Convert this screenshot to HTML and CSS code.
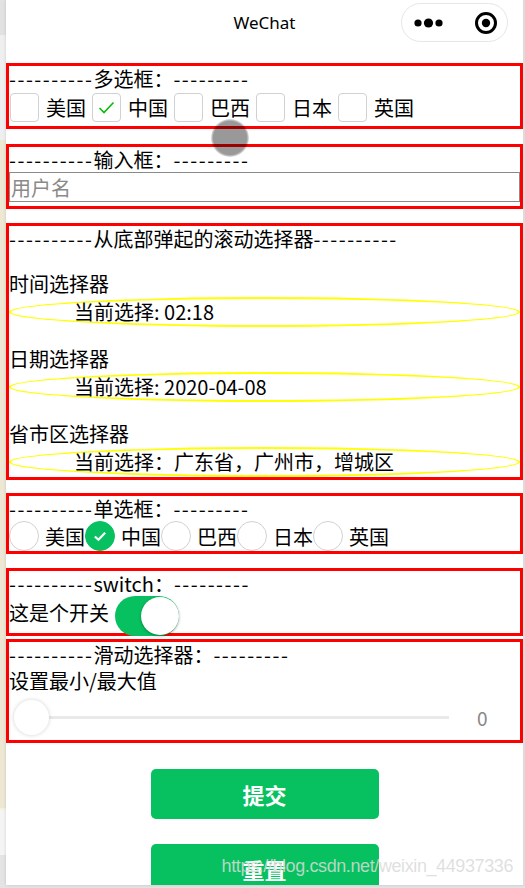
FILE: index.html
```html
<!DOCTYPE html>
<html lang="zh-CN">
<head>
<meta charset="utf-8">
<title>WeChat</title>
<link rel="stylesheet" href="styles.css">
</head>
<body>
<div class="screen">
  <div class="phone">
    <header class="nav">
      <span class="nav-title">WeChat</span>
      <div class="capsule">
        <svg class="cap-dots" width="30" height="12" viewBox="0 0 30 12"><circle cx="4" cy="6" r="3.6"/><circle cx="14.5" cy="6" r="4.6"/><circle cx="25" cy="6" r="3.6"/></svg>
        <svg class="cap-target" width="24" height="24" viewBox="0 0 24 24"><circle cx="12" cy="12" r="9.5" fill="none" stroke="#000" stroke-width="3"/><circle cx="12" cy="12" r="4.2"/></svg>
      </div>
    </header>

    <main class="page">
      <section class="box box-check">
        <div class="title"><span class="dash">----------</span>多选框：<span class="dash">---------</span></div>
        <div class="check-row">
          <label class="check-item"><span class="checkbox"></span><span>美国</span></label>
          <label class="check-item"><span class="checkbox"><svg width="27" height="27" viewBox="0 0 27 27"><path d="M6.5 14 L11 18.5 L20.5 8.5" fill="none" stroke="#09bb07" stroke-width="1.6"/></svg></span><span>中国</span></label>
          <label class="check-item"><span class="checkbox"></span><span>巴西</span></label>
          <label class="check-item"><span class="checkbox"></span><span>日本</span></label>
          <label class="check-item"><span class="checkbox"></span><span>英国</span></label>
        </div>
      </section>

      <section class="box box-input">
        <div class="title"><span class="dash">----------</span>输入框：<span class="dash">---------</span></div>
        <input class="input" type="text" placeholder="用户名">
      </section>

      <section class="box box-picker">
        <div class="title"><span class="dash">----------</span>从底部弹起的滚动选择器<span class="dash">----------</span></div>
        <div class="picker">
          <div class="picker-label">时间选择器</div>
          <div class="picker-value">当前选择: 02:18</div>
        </div>
        <div class="picker">
          <div class="picker-label">日期选择器</div>
          <div class="picker-value">当前选择: 2020-04-08</div>
        </div>
        <div class="picker">
          <div class="picker-label">省市区选择器</div>
          <div class="picker-value">当前选择：广东省，广州市，增城区</div>
        </div>
      </section>

      <section class="box box-radio">
        <div class="title"><span class="dash">----------</span>单选框：<span class="dash">---------</span></div>
        <div class="radio-row">
          <label class="radio-item"><span class="radio"></span><span>美国</span></label>
          <label class="radio-item"><span class="radio radio-on"><svg width="30" height="30" viewBox="0 0 30 30"><path d="M9.5 15.5 L13.3 19 L20.5 11.5" fill="none" stroke="#fff" stroke-width="2.4"/></svg></span><span>中国</span></label>
          <label class="radio-item"><span class="radio"></span><span>巴西</span></label>
          <label class="radio-item"><span class="radio"></span><span>日本</span></label>
          <label class="radio-item"><span class="radio"></span><span>英国</span></label>
        </div>
      </section>

      <section class="box box-switch">
        <div class="title"><span class="dash">----------</span>switch：<span class="dash">---------</span></div>
        <div class="switch-row">
          <span class="switch-label">这是个开关</span>
          <span class="switch"><span class="switch-knob"></span></span>
        </div>
      </section>

      <section class="box box-slider">
        <div class="title"><span class="dash">----------</span>滑动选择器：<span class="dash">---------</span></div>
        <div class="slider-label">设置最小/最大值</div>
        <div class="slider">
          <div class="slider-bar"><span class="slider-knob"></span></div>
          <span class="slider-value">0</span>
        </div>
      </section>

      <div class="actions">
        <button class="btn">提交</button>
        <button class="btn">重置</button>
      </div>
    </main>

    <div class="touch"></div>
    <div class="watermark">https://blog.csdn.net/weixin_44937336</div>
  </div>
</div>
</body>
</html>
```

FILE: styles.css
```css
html, body {
  margin: 0;
  padding: 0;
}

body {
  width: 525px;
  height: 888px;
  overflow: hidden;
  font-family: "Noto Sans CJK SC", "Noto Sans", sans-serif;
}

.screen {
  width: 525px;
  height: 888px;
  background: linear-gradient(to bottom, #e2e2e2 0 35px, #efefef 35px 140px, #ede7d4 140px 808px, #f6f1de 808px 810px, #f4f4f4 810px 855px, #e4e4e4 855px);
}

.phone {
  position: relative;
  margin-left: 6px;
  width: 517px;
  height: 885px;
  background: #fff;
  border-right: 2px solid #dcdcdc;
  overflow: hidden;
  box-shadow: 0 0 3px rgba(0, 0, 0, 0.15);
}

/* nav */
.nav {
  position: relative;
  height: 46px;
  display: flex;
  align-items: center;
  justify-content: center;
}

.nav-title {
  font-family: "Noto Sans", sans-serif;
  font-size: 17px;
  color: #000;
  margin-top: -1px;
}

.capsule {
  position: absolute;
  right: 15px;
  top: 3px;
  width: 107px;
  height: 39px;
  box-sizing: border-box;
  border: 1px solid #e6e6e6;
  border-radius: 20px;
  display: flex;
  align-items: center;
}

.cap-dots {
  margin-left: 12px;
}

.cap-target {
  margin-left: 30px;
}

/* page */
.page {
  padding-top: 17px;
  font-size: 20px;
  line-height: 25px;
  color: #000;
}

.box {
  border: 3px solid #ff0000;
}

.box + .box {
  margin-top: 15px;
}

.title {
  height: 25px;
  line-height: 25px;
  white-space: nowrap;
}

.dash {
  letter-spacing: 1.5px;
}

/* checkbox */
.box-check .title {
  height: 26px;
  line-height: 26px;
}

.check-row {
  display: flex;
  align-items: flex-start;
  height: 34px;
  padding-left: 1px;
  box-sizing: border-box;
  padding-top: 1px;
}

.check-item {
  display: flex;
  align-items: center;
  margin-right: 6px;
}

.checkbox {
  width: 29px;
  height: 29px;
  box-sizing: border-box;
  border: 1px solid #d1d1d1;
  border-radius: 4px;
  margin-right: 7px;
  display: flex;
  align-items: center;
  justify-content: center;
}

/* input */
.input {
  display: block;
  width: 511px;
  height: 30px;
  margin: 0 0 4px 0;
  padding: 0 0 0 1px;
  box-sizing: border-box;
  border: 1px solid #8a8a8a;
  font-family: "Noto Sans CJK SC", sans-serif;
  font-size: 20px;
  color: #000;
  outline: none;
}

.input::placeholder {
  color: #8a8a8a;
}

/* picker */
.box + .box-picker {
  margin-top: 14px;
}

.box-picker .title {
  height: 26px;
  line-height: 26px;
}

.picker {
  margin-top: 19px;
}

.picker-label {
  line-height: 26px;
}

.picker-value {
  height: 30px;
  box-sizing: border-box;
  border: 2px solid #ffff00;
  border-radius: 50%;
  padding-left: 63px;
  line-height: 26px;
  white-space: nowrap;
}

/* radio */
.box + .box-radio {
  margin-top: 13px;
}

.radio-row {
  display: flex;
  height: 30px;
}

.radio-item {
  display: flex;
  align-items: center;
}

.radio {
  width: 30px;
  height: 30px;
  box-sizing: border-box;
  border: 1px solid #d1d1d1;
  border-radius: 50%;
  margin-right: 6px;
  display: flex;
  align-items: center;
  justify-content: center;
}

.radio-on {
  background: #07c160;
  border-color: #07c160;
}

/* switch */
.box + .box-switch {
  margin-top: 14px;
}

.switch-row {
  display: flex;
  align-items: flex-start;
  height: 37px;
}

.switch-label {
  line-height: 34px;
}

.switch {
  position: relative;
  margin-left: 6px;
  width: 64px;
  height: 40px;
  border-radius: 20px;
  background: #07c160;
  flex: none;
}

.switch-knob {
  position: absolute;
  right: 0;
  top: 1px;
  width: 38px;
  height: 38px;
  border-radius: 50%;
  background: #fff;
  box-shadow: 0 1px 3px rgba(0, 0, 0, 0.35);
}

/* slider */
.box + .box-slider {
  margin-top: 3px;
}

.box-slider .title,
.slider-label {
  height: 26px;
  line-height: 26px;
}

.slider {
  display: flex;
  align-items: center;
  padding: 6px 0 5px 5px;
}

.slider-bar {
  position: relative;
  width: 435px;
  height: 35px;
  flex: none;
}

.slider-bar::before {
  content: "";
  position: absolute;
  left: 17px;
  right: 0;
  top: 16px;
  height: 3px;
  background: #e9e9e9;
}

.slider-knob {
  position: absolute;
  left: 0;
  top: 0;
  width: 35px;
  height: 35px;
  border-radius: 50%;
  background: #fff;
  box-shadow: 0 0 4px rgba(0, 0, 0, 0.18);
}

.slider-value {
  margin-left: 28px;
  font-size: 19px;
  color: #888;
}

/* buttons */
.actions {
  display: flex;
  flex-direction: column;
  align-items: center;
  gap: 25px;
  margin-top: 26px;
}

.btn {
  width: 228px;
  height: 50px;
  border: none;
  border-radius: 5px;
  background: #07c160;
  color: #fff;
  font-family: "Noto Sans CJK SC", sans-serif;
  font-size: 22px;
  font-weight: bold;
  padding: 0;
  flex: none;
}

/* overlays */
.touch {
  position: absolute;
  left: 205px;
  top: 119px;
  width: 38px;
  height: 38px;
  border-radius: 50%;
  background: radial-gradient(circle, rgba(0, 0, 0, 0.4) 0 62%, rgba(0, 0, 0, 0) 74%);
}

.watermark {
  position: absolute;
  right: 10px;
  top: 856px;
  font-family: "Liberation Sans", Arial, sans-serif;
  font-size: 18px;
  letter-spacing: -0.4px;
  color: rgba(218, 218, 218, 0.85);
  white-space: nowrap;
}
```
